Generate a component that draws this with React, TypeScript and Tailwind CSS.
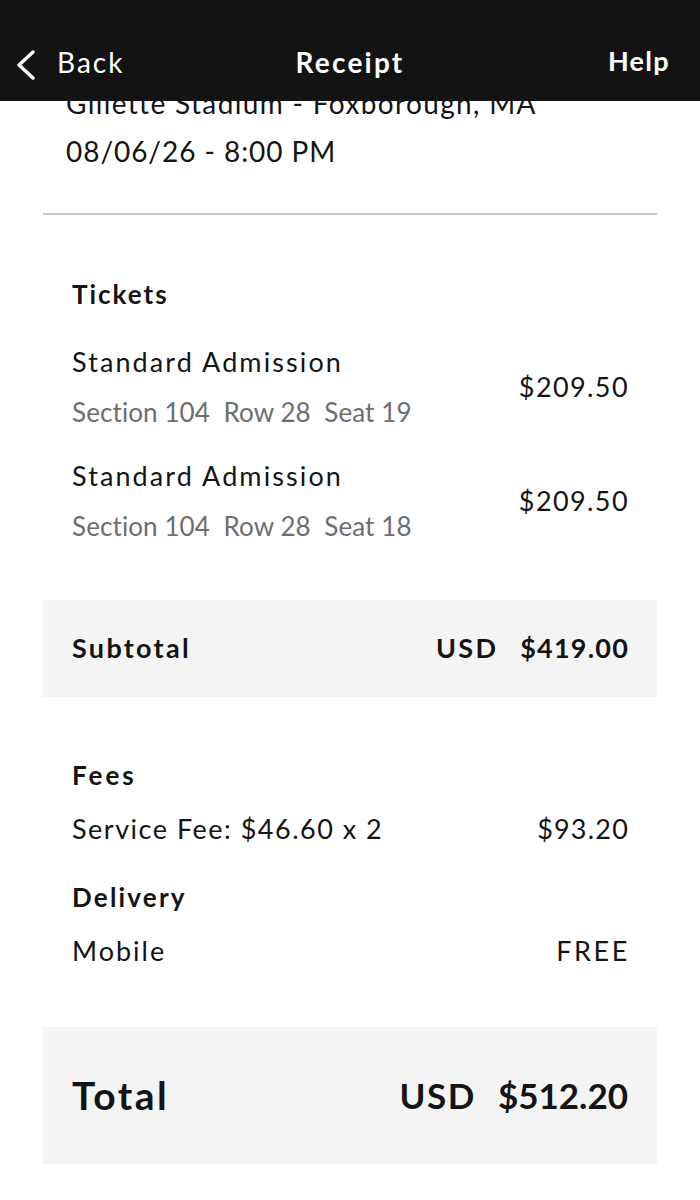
import React from "react";

const font = { fontFamily: "Lato, 'Noto Sans', sans-serif" };

function TicketRow({ seat }: { seat: string }) {
  return (
    <div className="flex items-center justify-between">
      <div className="flex flex-col">
        <div className="text-[27px] leading-[36px] text-[#141414] tracking-[2.1px]">Standard Admission</div>
        <div className="text-[26px] leading-[36px] text-[#6e6e6e] mt-[14px] tracking-[0.1px]">
          Section 104&nbsp;&nbsp;Row 28&nbsp;&nbsp;Seat {seat}
        </div>
      </div>
      <div className="text-[27px] text-[#141414] tracking-[1.4px] mr-[-1px]">$209.50</div>
    </div>
  );
}

export default function App() {
  return (
    <div style={font} className="w-[700px] h-[1200px] bg-white overflow-hidden flex flex-col">
      <header className="h-[101px] bg-[#131313] flex items-center justify-between pl-[14px] pr-[30px] relative z-10 shrink-0">
        <div className="flex items-center gap-[19px] pt-[22px]">
          <svg width="24" height="30" viewBox="0 0 24 30" fill="none" className="mt-[6px]">
            <path d="M19 2 L5 15 L19 28" stroke="white" strokeWidth="3.4" strokeLinecap="round" strokeLinejoin="round" />
          </svg>
          <span className="text-white text-[28px] tracking-[2px]">Back</span>
        </div>
        <span className="text-white text-[28px] font-bold tracking-[2.2px] pt-[22px] absolute left-1/2 -translate-x-1/2">Receipt</span>
        <span className="text-white text-[27px] font-bold tracking-[1.3px] pt-[22px]">Help</span>
      </header>

      <div className="px-[43px] flex flex-col">
        <div className="px-[23px] mt-[-22px] flex flex-col">
          <div className="text-[28px] leading-[48px] text-[#141414] tracking-[1.35px] whitespace-nowrap">Gillette Stadium - Foxborough, MA</div>
          <div className="text-[28px] leading-[48px] text-[#141414] tracking-[0.95px]">08/06/26 - 8:00 PM</div>
        </div>
        <div className="mt-[38px] h-[2px] bg-[#c8c8c8]" />

        <div className="px-[29px] pt-[63px] pb-[56px] flex flex-col">
          <div className="text-[26px] font-bold text-[#141414] leading-[32px] mb-[34px] tracking-[2px]">Tickets</div>
          <div className="flex flex-col gap-[28px]">
            <TicketRow seat="19" />
            <TicketRow seat="18" />
          </div>
        </div>

        <div className="bg-[#f4f4f4] h-[97px] px-[29px] flex items-center justify-between">
          <span className="text-[27px] font-bold text-[#141414] tracking-[2.3px]">Subtotal</span>
          <span className="text-[27px] font-bold text-[#141414] flex gap-[22px]">
            <span className="tracking-[2.3px]">USD</span>
            <span className="tracking-[1.2px] mr-[-1px]">$419.00</span>
          </span>
        </div>

        <div className="px-[29px] pt-[60px] pb-[58px] flex flex-col">
          <div className="text-[26px] font-bold text-[#141414] leading-[36px] tracking-[3px]">Fees</div>
          <div className="flex justify-between text-[27px] text-[#141414] leading-[36px] mt-[18px]">
            <span className="tracking-[1.5px]">Service Fee: $46.60 x 2</span>
            <span className="tracking-[1.2px] mr-[-1px]">$93.20</span>
          </div>
          <div className="text-[26px] font-bold text-[#141414] leading-[36px] mt-[32px] tracking-[2.2px]">Delivery</div>
          <div className="flex justify-between text-[27px] text-[#141414] leading-[36px] mt-[18px]">
            <span className="tracking-[2px]">Mobile</span>
            <span className="tracking-[2.6px] mr-[-2px]">FREE</span>
          </div>
        </div>

        <div className="bg-[#f4f4f4] h-[137px] px-[29px] flex items-center justify-between">
          <span className="text-[39px] font-bold text-[#141414] tracking-[2.5px]">Total</span>
          <span className="text-[35px] font-bold text-[#141414] flex gap-[22px]">
            <span className="tracking-[1.5px]">USD</span>
            <span>$512.20</span>
          </span>
        </div>
      </div>
    </div>
  );
}
